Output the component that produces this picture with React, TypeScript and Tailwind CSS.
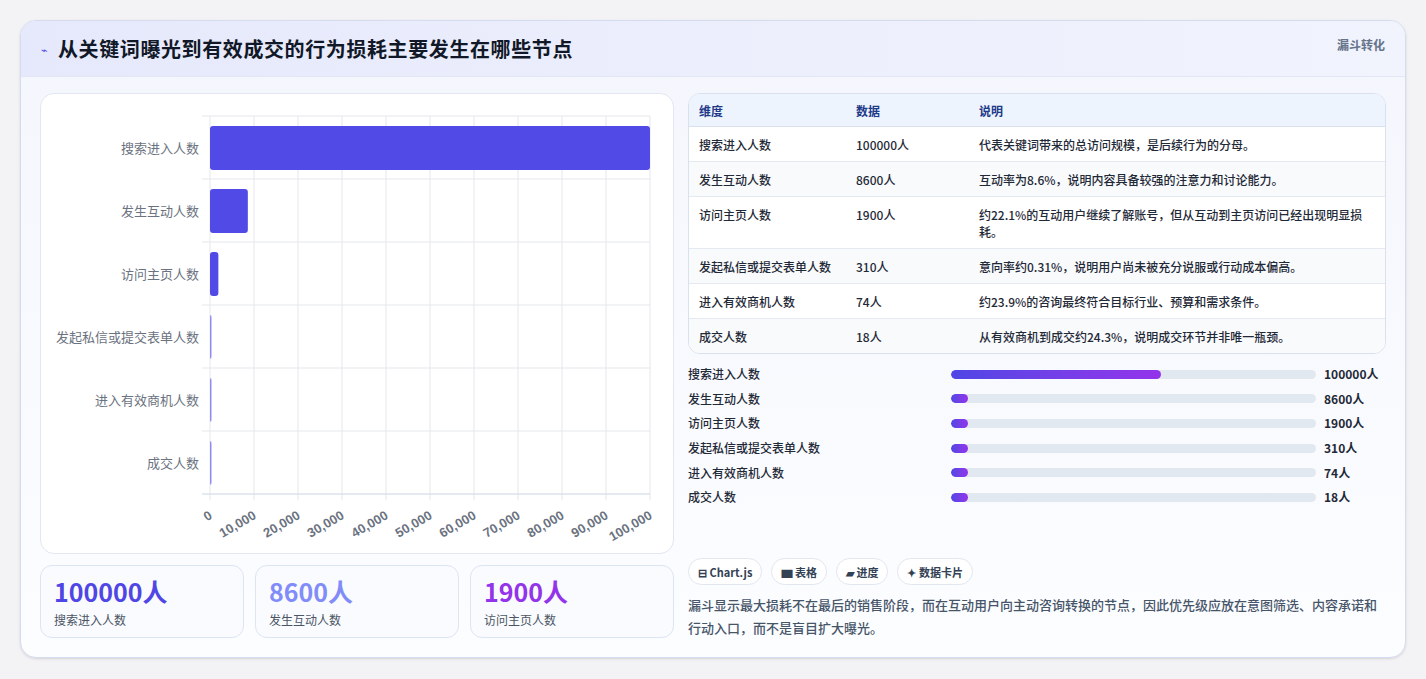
import React from "react";

const rows = [
  { k: "搜索进入人数", v: 100000, d: "代表关键词带来的总访问规模，是后续行为的分母。" },
  { k: "发生互动人数", v: 8600, d: "互动率为8.6%，说明内容具备较强的注意力和讨论能力。" },
  { k: "访问主页人数", v: 1900, d: "约22.1%的互动用户继续了解账号，但从互动到主页访问已经出现明显损耗。" },
  { k: "发起私信或提交表单人数", v: 310, d: "意向率约0.31%，说明用户尚未被充分说服或行动成本偏高。" },
  { k: "进入有效商机人数", v: 74, d: "约23.9%的咨询最终符合目标行业、预算和需求条件。" },
  { k: "成交人数", v: 18, d: "从有效商机到成交约24.3%，说明成交环节并非唯一瓶颈。" },
];

function Chart() {
  const x0 = 169, w = 440, y0 = 22, rh = 63;
  const ticks = Array.from({ length: 11 }, (_, i) => i);
  return (
    <svg width="633" height="460" style={{ fontFamily: "'Noto Sans CJK SC', sans-serif" }}>
      {ticks.map((i) => (
        <line key={i} x1={x0 + i * 44} x2={x0 + i * 44} y1={y0} y2={y0 + 6 * rh + 6} stroke="#e5e7eb" />
      ))}
      {Array.from({ length: 7 }, (_, i) => (
        <line key={i} x1={x0 - 8} x2={x0 + w} y1={y0 + i * rh} y2={y0 + i * rh} stroke={i === 6 ? "#cbd5e1" : "#e5e7eb"} />
      ))}
      {rows.map((r, i) => {
        const bw = Math.max(1.5, (r.v / 100000) * w);
        return (
          <g key={i}>
            <rect x={x0} y={y0 + i * rh + 10} width={bw} height={44} rx={3} fill="#4f46e5" opacity={i > 2 ? 0.6 : 0.98} />
            <text x={x0 - 11} y={y0 + i * rh + 37} textAnchor="end" fontSize="13" fill="#6b7280">{r.k}</text>
          </g>
        );
      })}
      {ticks.map((i) => (
        <text key={i} transform={`translate(${x0 + i * 44 + 3},${y0 + 6 * rh + 24}) rotate(-30)`} textAnchor="end" fontSize="13" fontWeight="700" fill="#6b7280" style={{ fontFamily: "'Liberation Sans', sans-serif" }}>
          {(i * 10000).toLocaleString("en-US")}
        </text>
      ))}
    </svg>
  );
}

export default function App() {
  return (
    <div className="w-[1426px] h-[679px] bg-[#f3f3f5] pt-[20px] px-[20px]" style={{ fontFamily: "'Noto Sans CJK SC', 'Noto Sans', sans-serif" }}>
      <div className="w-[1386px] h-[638px] rounded-[16px] border border-[#d6dcef] bg-gradient-to-b from-[#f4f6fd] to-[#fcfdff] shadow-sm overflow-hidden">
        <div className="h-[56px] bg-gradient-to-r from-[#e6e9fb] to-[#f1f3fd] border-b border-[#e2e6f5] flex items-start justify-between px-[20px]">
          <div className="flex items-center gap-[10px] mt-[13px]">
            <span className="text-[#4f46e5] text-[11px]">⌁</span>
            <span className="text-[20px] font-bold text-[#111827] tracking-[0.6px]">从关键词曝光到有效成交的行为损耗主要发生在哪些节点</span>
          </div>
          <span className="mt-[15px] text-[12px] font-bold text-[#64748b]">漏斗转化</span>
        </div>
        <div className="flex gap-[14px] px-[19px] pt-[16px]">
          <div className="w-[634px] flex flex-col gap-[11px]">
            <div className="h-[461px] rounded-[14px] border border-[#e2e6f0] bg-white">
              <Chart />
            </div>
            <div className="flex gap-[11px]">
              {[["100000人", "#4f46e5", "搜索进入人数"], ["8600人", "#818cf8", "发生互动人数"], ["1900人", "#9333ea", "访问主页人数"]].map(([a, c, b]) => (
                <div key={a} className="flex-1 h-[73px] rounded-[12px] border border-[#dde5f3] bg-[#f9fbff] px-[13px] pt-[9px]">
                  <div className="text-[25px] leading-[32px] font-bold" style={{ color: c }}>{a}</div>
                  <div className="text-[12px] text-[#4b5563] mt-[4px]">{b}</div>
                </div>
              ))}
            </div>
          </div>
          <div className="w-[700px]">
            <div className="rounded-[12px] border border-[#d9e1ef] bg-white overflow-hidden text-[12px] leading-[17px]">
              <div className="flex h-[33px] items-center bg-[#eef4fd] border-b border-[#d9e1ef] font-bold text-[#1e3a8a]">
                <div className="w-[167px] pl-[10px]">维度</div>
                <div className="w-[123px]">数据</div>
                <div className="flex-1">说明</div>
              </div>
              {rows.map((r, i) => (
                <div key={i} className={`flex pt-[9px] pb-[8px] text-[#1f2937] font-medium ${i % 2 ? "bg-[#f8fafc]" : "bg-white"} ${i < 5 ? "border-b border-[#e5e9f2]" : ""}`}>
                  <div className="w-[167px] pl-[10px] h-[17px] leading-[17px]">{r.k}</div>
                  <div className="w-[123px] h-[17px] leading-[17px]">{r.v}人</div>
                  <div className="flex-1 pr-[14px] leading-[17px]">{r.d}</div>
                </div>
              ))}
            </div>
            <div className="mt-[11px] flex flex-col gap-[6.7px] text-[12px] font-medium text-[#1f2937]">
              {rows.map((r, i) => (
                <div key={i} className="flex items-center h-[18px]">
                  <div className="w-[263px]">{r.k}</div>
                  <div className="w-[365px] h-[9px] rounded-full bg-[#e2e8f0] overflow-hidden">
                    <div className="h-full rounded-full bg-gradient-to-r from-[#4f46e5] to-[#9333ea]" style={{ width: i === 0 ? 210 : 17 }} />
                  </div>
                  <div className="ml-[8px] font-bold">{r.v}人</div>
                </div>
              ))}
            </div>
            <div className="mt-[52px] flex gap-[9px] text-[11px] font-bold text-[#334155]">
              {["⊟ Chart.js", "▆ 表格", "▰ 进度", "✦ 数据卡片"].map((t) => (
                <span key={t} className="h-[27px] px-[9px] rounded-full border border-[#e2e6ee] bg-white flex items-center">{t}</span>
              ))}
            </div>
            <p className="mt-[8px] text-[13px] leading-[23px] font-medium text-[#475569]">漏斗显示最大损耗不在最后的销售阶段，而在互动用户向主动咨询转换的节点，因此优先级应放在意图筛选、内容承诺和行动入口，而不是盲目扩大曝光。</p>
          </div>
        </div>
      </div>
    </div>
  );
}
